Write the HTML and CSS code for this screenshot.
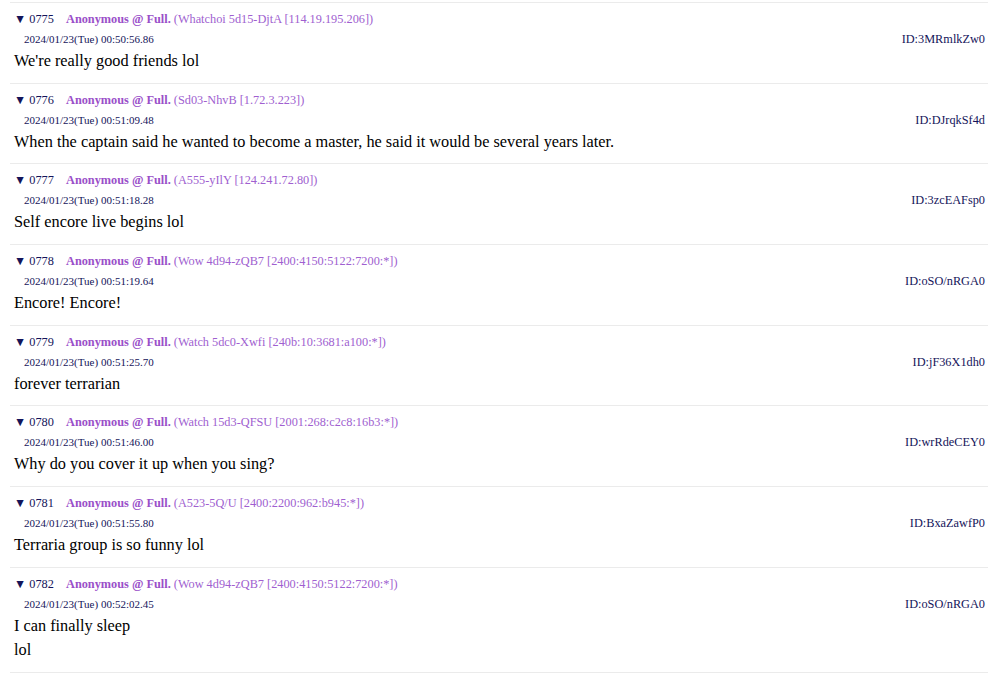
FILE: index.html
```html
<!DOCTYPE html>
<html>
<head>
<meta charset="utf-8">
<link rel="stylesheet" href="styles.css">
</head>
<body>
<div class="thread">
  <div class="post">
    <div class="head"><span class="num">▼ 0775</span><span class="name">Anonymous @ Full.</span> <span class="trip">(Whatchoi 5d15-DjtA [114.19.195.206])</span></div>
    <div class="meta"><span class="date">2024/01/23(Tue) 00:50:56.86</span><span class="uid">ID:3MRmlkZw0</span></div>
    <div class="msg">We're really good friends lol</div>
  </div>
  <div class="post">
    <div class="head"><span class="num">▼ 0776</span><span class="name">Anonymous @ Full.</span> <span class="trip">(Sd03-NhvB [1.72.3.223])</span></div>
    <div class="meta"><span class="date">2024/01/23(Tue) 00:51:09.48</span><span class="uid">ID:DJrqkSf4d</span></div>
    <div class="msg">When the captain said he wanted to become a master, he said it would be several years later.</div>
  </div>
  <div class="post">
    <div class="head"><span class="num">▼ 0777</span><span class="name">Anonymous @ Full.</span> <span class="trip">(A555-yIlY [124.241.72.80])</span></div>
    <div class="meta"><span class="date">2024/01/23(Tue) 00:51:18.28</span><span class="uid">ID:3zcEAFsp0</span></div>
    <div class="msg">Self encore live begins lol</div>
  </div>
  <div class="post">
    <div class="head"><span class="num">▼ 0778</span><span class="name">Anonymous @ Full.</span> <span class="trip">(Wow 4d94-zQB7 [2400:4150:5122:7200:*])</span></div>
    <div class="meta"><span class="date">2024/01/23(Tue) 00:51:19.64</span><span class="uid">ID:oSO/nRGA0</span></div>
    <div class="msg">Encore! Encore!</div>
  </div>
  <div class="post">
    <div class="head"><span class="num">▼ 0779</span><span class="name">Anonymous @ Full.</span> <span class="trip">(Watch 5dc0-Xwfi [240b:10:3681:a100:*])</span></div>
    <div class="meta"><span class="date">2024/01/23(Tue) 00:51:25.70</span><span class="uid">ID:jF36X1dh0</span></div>
    <div class="msg">forever terrarian</div>
  </div>
  <div class="post">
    <div class="head"><span class="num">▼ 0780</span><span class="name">Anonymous @ Full.</span> <span class="trip">(Watch 15d3-QFSU [2001:268:c2c8:16b3:*])</span></div>
    <div class="meta"><span class="date">2024/01/23(Tue) 00:51:46.00</span><span class="uid">ID:wrRdeCEY0</span></div>
    <div class="msg">Why do you cover it up when you sing?</div>
  </div>
  <div class="post">
    <div class="head"><span class="num">▼ 0781</span><span class="name">Anonymous @ Full.</span> <span class="trip">(A523-5Q/U [2400:2200:962:b945:*])</span></div>
    <div class="meta"><span class="date">2024/01/23(Tue) 00:51:55.80</span><span class="uid">ID:BxaZawfP0</span></div>
    <div class="msg">Terraria group is so funny lol</div>
  </div>
  <div class="post">
    <div class="head"><span class="num">▼ 0782</span><span class="name">Anonymous @ Full.</span> <span class="trip">(Wow 4d94-zQB7 [2400:4150:5122:7200:*])</span></div>
    <div class="meta"><span class="date">2024/01/23(Tue) 00:52:02.45</span><span class="uid">ID:oSO/nRGA0</span></div>
    <div class="msg">I can finally sleep<br>lol</div>
  </div>
</div>
</body>
</html>
```

FILE: styles.css
```css
html, body {
  margin: 0;
  padding: 0;
  background: #fff;
}
body {
  font-family: "Liberation Serif", "Times New Roman", serif;
  color: #000;
}
.thread {
  margin: 0 5px 0 10px;
  padding-top: 2px;
}
.post {
  border-top: 1px solid #ebebeb;
  padding: 6px 3px 9.7px 4px;
}
.post:last-child {
  border-bottom: 1px solid #ebebeb;
}
.head {
  font-size: 12.3px;
  line-height: 20px;
  height: 20px;
  white-space: nowrap;
}
.num {
  color: #14145a;
  display: inline-block;
  width: 52px;
}
.name {
  color: #9a4fc9;
  font-weight: bold;
}
.trip {
  color: #a05fd0;
}
.meta {
  display: flex;
  justify-content: space-between;
  align-items: baseline;
  font-size: 11px;
  line-height: 16px;
  color: #14145a;
  padding-left: 10px;
  margin-top: 2px;
}
.uid {
  font-size: 12.3px;
}
.msg {
  font-size: 16.3px;
  line-height: 24px;
  margin-top: 2px;
}
```
